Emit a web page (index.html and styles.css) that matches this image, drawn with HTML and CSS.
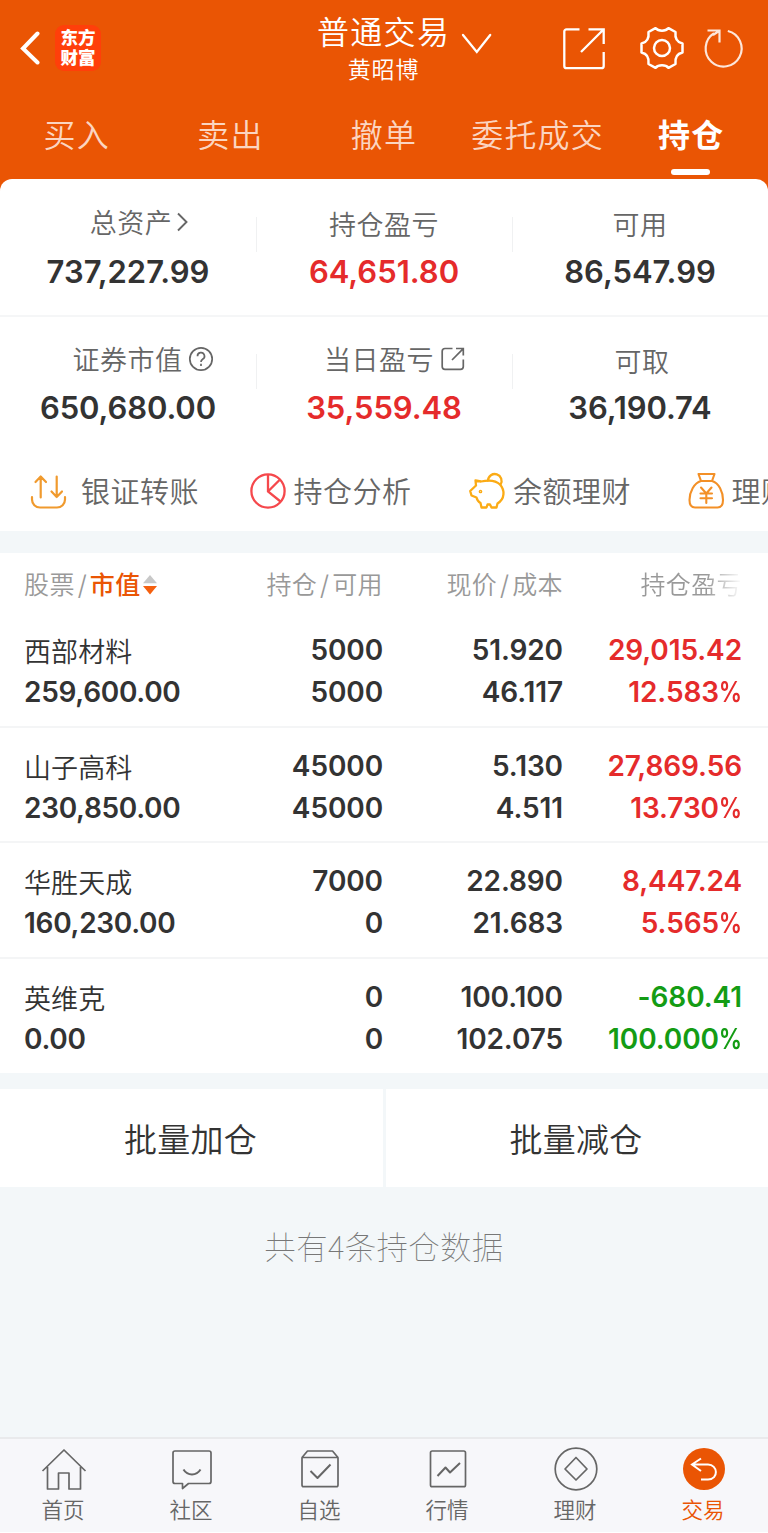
FILE: index.html
```html
<!DOCTYPE html>
<html lang="zh-CN">
<head>
<meta charset="utf-8">
<title>普通交易</title>
<link rel="stylesheet" href="styles.css">
</head>
<body>
<div class="app">
  <header class="header">
    <div class="topbar">
      <div class="topbar-left">
        <svg class="back" width="22" height="38" viewBox="0 0 22 38" fill="none" stroke="#fff" stroke-width="4" stroke-linecap="round"><path d="M19.500 4.500 5 19.500 19.500 33.500"/></svg>
        <div class="logo">东方财富</div>
      </div>
      <div class="title"><div class="title-main">普通交易</div><div class="title-sub">黄昭博</div></div>
      <svg class="caret" width="32" height="24" viewBox="0 0 32 24" fill="none" stroke="#fff" stroke-width="2.300" stroke-linecap="round"><path d="M2 3 15.800 20 29.200 3"/></svg>
      <div class="tools">
        <svg width="44" height="44" viewBox="0 0 44 44" fill="none" stroke="#fff" stroke-width="2.300"><path d="M17.500 3.300H4.500A2.200 2.200 0 0 0 2.300 5.500V40A2.200 2.200 0 0 0 4.500 42.200H39.500A2.200 2.200 0 0 0 41.700 40V26M26.500 3.300H41.700V18M41 4 19 26"/></svg>
        <svg width="44" height="44" viewBox="0 0 44 44" fill="none" stroke="#fff" stroke-width="2.500" stroke-linejoin="round"><path d="M15.500 2.200C18.500 5.500 25.500 5.500 28.500 2.200L35.500 6C34.800 12.500 37.500 16.500 42.500 17.500V26.500C37.500 27.500 34.800 31.500 35.500 38L28.500 41.800C25.500 38.500 18.500 38.500 15.500 41.800L8.500 38C9.200 31.500 6.500 27.500 1.500 26.500V17.500C6.500 16.500 9.200 12.500 8.500 6Z"/><circle cx="22" cy="22" r="8"/></svg>
        <svg width="44" height="44" viewBox="0 0 44 44" fill="none" stroke="#fde6da" stroke-width="2.200"><path d="M25.800 5A18 18 0 1 1 12 7.300M5.500 4.500H17.500V16.500M17 5 11 9"/></svg>
      </div>
    </div>
    <nav class="tabs">
      <span class="tab">买入</span><span class="tab">卖出</span><span class="tab">撤单</span><span class="tab">委托成交</span><span class="tab tab-active">持仓</span>
    </nav>
  </header>

  <main>
    <section class="summary">
      <div class="sum-row">
        <div class="cell"><div class="label label-a">总资产<svg width="18" height="24" viewBox="0 0 18 24" fill="none" stroke="#666" stroke-width="1.900"><path d="M6 3.500 14.500 12 6 20.500"/></svg></div><div class="value">737,227.99</div></div>
        <div class="cell"><div class="label label-low">持仓盈亏</div><div class="value red">64,651.80</div></div>
        <div class="cell"><div class="label label-low">可用</div><div class="value">86,547.99</div></div>
      </div>
      <div class="sum-row">
        <div class="cell"><div class="label label-b">证券市值<svg class="help" width="26" height="26" viewBox="0 0 26 26" fill="none" stroke="#666" stroke-width="1.700"><circle cx="13" cy="13" r="11.200"/><path d="M9.500 10.300A3.500 3.500 0 1 1 14.600 13.200C13.300 14 13 14.600 13 16"/><path d="M13 17.800V20"/></svg></div><div class="value">650,680.00</div></div>
        <div class="cell"><div class="label label-c">当日盈亏<svg class="share" width="26" height="26" viewBox="0 0 26 26" fill="none" stroke="#666" stroke-width="1.700"><path d="M12.500 2.500H5A2.800 2.800 0 0 0 2.200 5.300V20.500A2.800 2.800 0 0 0 5 23.300H20.500A2.800 2.800 0 0 0 23.300 20.500V13.500M16 2.500H23.300V9.500M23 2.800 12 14"/></svg></div><div class="value red">35,559.48</div></div>
        <div class="cell"><div class="label label-low label-d">可取</div><div class="value">36,190.74</div></div>
      </div>
    </section>

    <section class="quick">
      <div class="q q1"><svg width="38" height="38" viewBox="0 0 38 38" fill="none" stroke="#f09a2e" stroke-width="2.200" stroke-linecap="round" stroke-linejoin="round"><path d="M3 25V27.500A8 8 0 0 0 11 35.500H28A8 8 0 0 0 36 27.500V25M11.700 25.500V4.500M6.500 10 11.700 4.500 17 10M27.700 4.500V25M22.500 19.500 27.700 25 33 19.500"/></svg><span>银证转账</span></div>
      <div class="q q2"><svg width="38" height="38" viewBox="0 0 38 38" fill="none" stroke="#f5484c" stroke-width="2.300"><circle cx="19" cy="19" r="16.600"/><path d="M19 2.500V19.500L31.500 29.500M19 19.500 30.500 8"/></svg><span>持仓分析</span></div>
      <div class="q q3"><svg width="38" height="38" viewBox="0 0 38 38" fill="none" stroke="#fbab15" stroke-width="2.300" stroke-linejoin="round" stroke-linecap="round"><path d="M20 8.500A6.800 6.800 0 1 1 32.500 12.500"/><path d="M7.500 8.500 13 9.500C22 7.500 28 8.500 32 12.500C37 18 37 27 29.500 31.500L28.500 35.500H23.500L22 32.500H19.500L18.500 35.500H13.500L12.500 31C10.500 30 9 27.500 8.500 25.500L3.500 23.500 2.200 19 8 13.500Z"/><circle cx="12.500" cy="19.500" r=".7"/></svg><span>余额理财</span></div>
      <div class="q q4"><svg width="38" height="38" viewBox="0 0 38 38" fill="none" stroke="#f39027" stroke-width="2.100" stroke-linejoin="round" stroke-linecap="round"><path d="M11.500 2H27.500L25 9H14ZM14 9C7 11 2.500 20 2.500 28C2.500 33 4.500 35.500 8 35.500H30.500C34 35.500 36 33 36 28C36 20 32 11 25 9"/><path d="M14 15.500 19.300 21.500 24.500 15.500M19.300 21.500V31M13.500 21.500H25M13.500 26.300H25"/></svg><span>理财</span></div>
    </section>

    <section class="holdings">
      <div class="thead">
        <div class="col-a">股票<i>/</i><b>市值</b><svg width="16" height="22" viewBox="0 0 16 22"><path d="M8 1 15 9.300H1Z" fill="#c8c8c8"/><path d="M1 12H15L8 20.500Z" fill="#f5600f"/></svg></div>
        <div class="col-b">持仓<i>/</i>可用</div>
        <div class="col-c">现价<i>/</i>成本</div>
        <div class="col-d"><span class="fade">持仓盈亏</span></div>
      </div>
      <div class="row">
        <div class="col-a"><p class="name">西部材料</p><p>259,600.00</p></div>
        <div class="col-b"><p>5000</p><p>5000</p></div>
        <div class="col-c"><p>51.920</p><p>46.117</p></div>
        <div class="col-d red"><p>29,015.42</p><p>12.583<span class="pct">%</span></p></div>
      </div>
      <div class="row">
        <div class="col-a"><p class="name">山子高科</p><p>230,850.00</p></div>
        <div class="col-b"><p>45000</p><p>45000</p></div>
        <div class="col-c"><p>5.130</p><p>4.511</p></div>
        <div class="col-d red"><p>27,869.56</p><p>13.730<span class="pct">%</span></p></div>
      </div>
      <div class="row">
        <div class="col-a"><p class="name">华胜天成</p><p>160,230.00</p></div>
        <div class="col-b"><p>7000</p><p>0</p></div>
        <div class="col-c"><p>22.890</p><p>21.683</p></div>
        <div class="col-d red"><p>8,447.24</p><p>5.565<span class="pct">%</span></p></div>
      </div>
      <div class="row">
        <div class="col-a"><p class="name">英维克</p><p>0.00</p></div>
        <div class="col-b"><p>0</p><p>0</p></div>
        <div class="col-c"><p>100.100</p><p>102.075</p></div>
        <div class="col-d green"><p>-680.41</p><p>100.000<span class="pct">%</span></p></div>
      </div>
    </section>

    <div class="batch"><div>批量加仓</div><div>批量减仓</div></div>
    <p class="count">共有4条持仓数据</p>
  </main>

  <nav class="bottom">
    <div class="nav"><svg width="46" height="46" viewBox="0 0 46 46" fill="none" stroke="#666" stroke-width="1.700" stroke-linejoin="round"><path d="M1.500 24 23 3 44.500 24M6.500 20V42H17.500V26H28V42H39.500V20"/></svg><span>首页</span></div>
    <div class="nav"><svg width="46" height="46" viewBox="0 0 46 46" fill="none" stroke="#666" stroke-width="1.700" stroke-linejoin="round"><path d="M6 4H40A2 2 0 0 1 42 6V34.500A2 2 0 0 1 40 36.500H19.500L13.500 41.500V36.500H6A2 2 0 0 1 4 34.500V6A2 2 0 0 1 6 4Z"/><path d="M14.500 22.500C18.500 29 27.500 29 31.500 22.500" stroke-width="2"/></svg><span>社区</span></div>
    <div class="nav"><svg width="46" height="46" viewBox="0 0 46 46" fill="none" stroke="#666" stroke-width="1.700" stroke-linejoin="round"><path d="M5 10.500H41V38A1.700 1.700 0 0 1 39.300 39.700H6.700A1.700 1.700 0 0 1 5 38ZM5 10.500 10.500 4H35.500L41 10.500"/><path d="M13.500 24 20.500 31 33.500 17.500" stroke-width="2"/></svg><span>自选</span></div>
    <div class="nav"><svg width="46" height="46" viewBox="0 0 46 46" fill="none" stroke="#666" stroke-width="1.700" stroke-linejoin="round"><rect x="5.500" y="4" width="35" height="35.700" rx="1.700"/><path d="M12.500 29 20.500 20.500 25 25.500 35 16" stroke-width="2"/></svg><span>行情</span></div>
    <div class="nav"><svg width="46" height="46" viewBox="0 0 46 46" fill="none" stroke="#666" stroke-width="1.700" stroke-linejoin="round"><circle cx="23" cy="22" r="20.800"/><path d="M23 10.500 34 22 23 33 12 22Z"/></svg><span>理财</span></div>
    <div class="nav nav-active"><svg width="46" height="46" viewBox="0 0 46 46" fill="none" stroke="#fff" stroke-width="2"><circle cx="23" cy="22" r="21" fill="#ea5504" stroke="none"/><path d="M20 11.500 11 17.500 20 24M11.500 17.500H27C37 17.500 38 32.500 27 32.500H20"/></svg><span>交易</span></div>
  </nav>
</div>
</body>
</html>
```

FILE: styles.css
```css
* { box-sizing: border-box; }
body { margin: 0; background: #fff; font-family: "Noto Sans CJK SC", sans-serif; color: #333; }
p { margin: 0; }
svg { display: block; flex: none; }
.app { width: 768px; height: 1533px; display: flex; flex-direction: column; overflow: hidden; background: #f3f7f9; border-bottom: 1px solid #fff; }
main { flex: 1; margin-top: -12px; }
.red { color: #e52b2b; }
.green { color: #149c14; }

/* Header */
.header { height: 191px; flex: none; background: #ea5504; color: #fff; }
.topbar { height: 96px; display: flex; }
.topbar-left { width: 318px; padding: 25px 0 0 18px; display: flex; gap: 15px; }
.back { margin-top: 4px; }
.logo { width: 46px; height: 46px; border-radius: 9px; background: #ff3f0a; padding: 2px 5px 0 5.500px; font-size: 17.500px; line-height: 20px; font-weight: 900; word-break: break-all; }
.title { width: 131px; padding-top: 11px; text-align: center; white-space: nowrap; }
.title-main { font-size: 32px; line-height: 40px; letter-spacing: 1.300px; font-weight: 350; margin: -1px 0 0 -1px; }
.title-sub { font-size: 23px; line-height: 34px; letter-spacing: .9px; font-weight: 350; margin-top: 1px; }
.caret { margin: 32px 0 0 12px; }
.tools { display: flex; margin: 26px 22px 0 auto; }
.tools svg + svg { margin-left: 34px; }
.tools svg + svg + svg { margin-left: 18px; }
.tabs { display: grid; grid-template-columns: repeat(5, 1fr); height: 83px; }
.tab { position: relative; text-align: center; font-size: 32px; line-height: 75px; letter-spacing: 1.200px; color: #fbd5c1; font-weight: 350; }
.tab-active { color: #fff; font-weight: 700; }
.tab-active::after { content: ""; position: absolute; left: 57px; top: 73px; width: 39px; height: 6px; border-radius: 3px; background: #fff; }

/* Account summary */
.summary { background: #fff; border-radius: 12px 12px 0 0; }
.sum-row { display: grid; grid-template-columns: repeat(3, 1fr); height: 138px; }
.sum-row:first-child { border-bottom: 2px solid #f5f6f7; }
.cell { padding-top: 23px; text-align: center; background: linear-gradient(#f0f1f2, #f0f1f2) 0 38px / 1px 35px no-repeat; }
.cell:first-child { background: none; }
.label { height: 40px; display: flex; justify-content: center; align-items: center; font-size: 27px; line-height: 40px; letter-spacing: .5px; color: #666; font-weight: 350; }
.label-a { padding-left: 24px; }
.label-b { padding-left: 30px; }
.label-c { padding-left: 22px; }
.label-d { padding-left: 4px; }
.label-low { padding-top: 3px; }
.help { margin-left: 5px; }
.share { margin-left: 6px; }
.value { font: 600 31px/40px Inter, sans-serif; margin-top: 10px; }
.sum-row + .sum-row { height: 135px; }
.sum-row + .sum-row .cell { padding-top: 22px; background-position: 0 37px; }
.sum-row + .sum-row .value { letter-spacing: -.1px; margin-top: 9px; }

/* Shortcuts */
.quick { height: 79px; display: flex; background: #fff; overflow: hidden; }
.q { width: 219.500px; flex: none; display: flex; font-size: 29px; line-height: 77px; letter-spacing: .5px; color: #666; font-weight: 350; white-space: nowrap; }
.q svg { margin-top: 20px; }
.q1, .q2, .q3 { padding-left: 29px; }
.q4 { padding-left: 28px; }
.q1 span { margin-left: 14px; }
.q2 span, .q3 span, .q4 span { margin-left: 7px; }

/* Holdings */
.holdings { margin-top: 22px; background: #fff; }
.thead, .row { display: grid; grid-template-columns: 196px 163px 180px 179px; padding-left: 24px; }
.thead { height: 59px; font-size: 25px; line-height: 61px; letter-spacing: .4px; color: #999; font-weight: 350; }
.thead > div { display: flex; }
.thead i { font: 300 27px/65px Inter, sans-serif; width: 15px; text-align: center; }
.thead b { font-weight: 500; color: #ea5504; }
.thead svg { margin: 21px 0 0 1px; }
.thead .col-b, .thead .col-c, .thead .col-d { justify-content: flex-end; }
.fade { background: linear-gradient(90deg, #999 65%, #fff 100%); -webkit-background-clip: text; background-clip: text; color: transparent; }
.row { height: 115.600px; padding-top: 17px; border-bottom: 2px solid #f4f5f6; font: 600 28px/42px Inter, sans-serif; letter-spacing: -.1px; }
.row:last-child { height: 114px; border-bottom: 0; }
.row .col-a { letter-spacing: -.3px; }
.name { font: 350 27px/43px "Noto Sans CJK SC", sans-serif; height: 42px; letter-spacing: .1px; }
.pct { display: inline-block; transform: scaleX(.83); transform-origin: right; margin-left: -5px; }
.col-b, .col-c, .col-d { text-align: right; }

/* Batch actions */
.batch { margin-top: 16px; height: 98px; display: grid; grid-template-columns: 383px 382px; gap: 3px; text-align: center; font-size: 33px; line-height: 98px; letter-spacing: .3px; font-weight: 350; }
.batch div { background: #fff; padding-right: 2px; }
.count { margin-top: 32px; text-align: center; font-size: 31.500px; line-height: 52px; letter-spacing: .3px; font-weight: 100; color: #777; }

/* Bottom navigation */
.bottom { height: 95px; flex: none; display: grid; grid-template-columns: repeat(6, 1fr); background: #f7f7fa; border-top: 2px solid #e9eaec; color: #666; }
.nav { display: flex; flex-direction: column; align-items: center; padding-top: 8px; font-size: 21.500px; line-height: 32px; font-weight: 350; }
.nav svg { margin-left: -1px; }
.nav span { margin-left: -2px; }
.nav-active { color: #ea5504; }
```
